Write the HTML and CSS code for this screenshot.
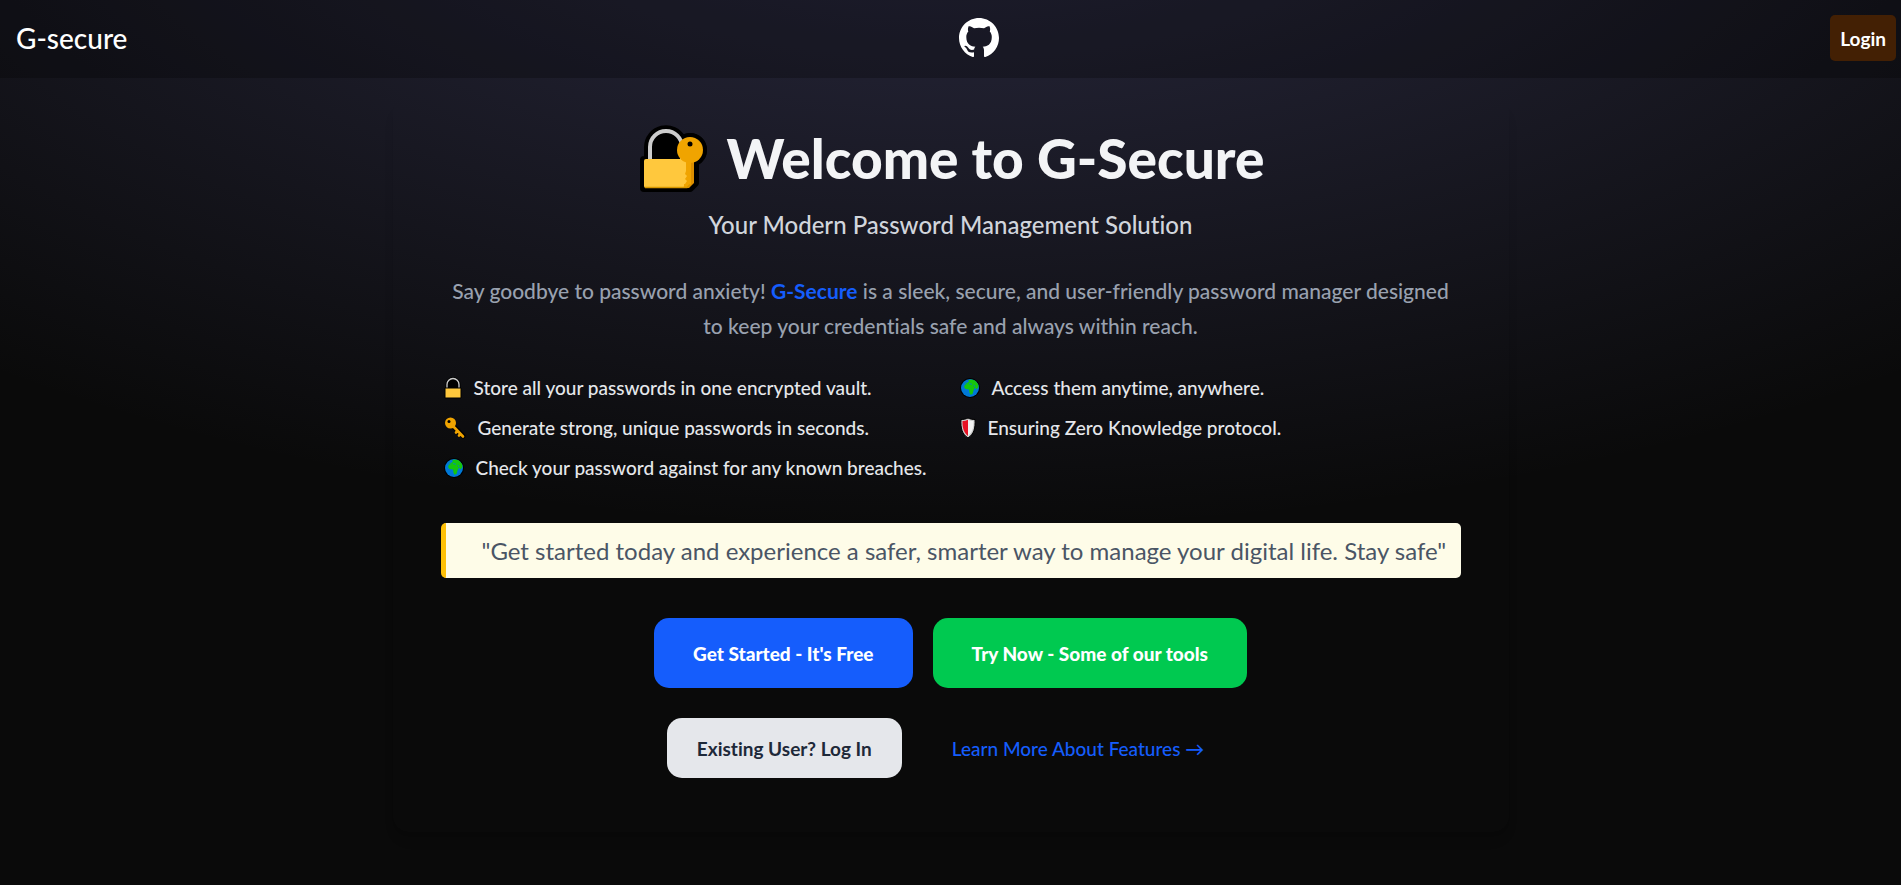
FILE: index.html
```
<!DOCTYPE html>
<html lang="en">
<head>
<meta charset="utf-8">
<title>G-secure</title>
<link rel="stylesheet" href="styles.css">
</head>
<body>
<svg class="defs" aria-hidden="true">
  <symbol id="lock" viewBox="0 0 18 22">
    <path d="M3 11V7.500a6 6 0 0 1 12 0V11" fill="#000" stroke="#000" stroke-width="3"/>
    <path d="M3 11V7.500a6 6 0 0 1 12 0V11" fill="#000" stroke="#ccc" stroke-width="1.300"/>
    <path d="M1 11h16v10H1z" fill="#ffc83d" stroke="#000"/>
  </symbol>
  <symbol id="key" viewBox="0 0 22 22">
    <path d="M6 6 19 19" stroke="#000" stroke-width="5" stroke-linecap="round"/>
    <circle cx="6.500" cy="6" r="5.500" fill="#f0a400"/>
    <path d="m8 8 11 11.500M13 14.500l-1 1M16 17.500l-1 1" stroke="#f0a400" stroke-width="2.600" stroke-linecap="round"/>
    <circle cx="5" cy="4.500" r="1.500" fill="#000"/>
  </symbol>
  <symbol id="globe" viewBox="0 0 20 20">
    <circle cx="10" cy="10" r="10" fill="#000"/>
    <circle cx="10" cy="10" r="9" fill="#0078d7"/>
    <path d="M4.500 4.500 7 5l2-1.500L8 2.300 11.500 1.500 15 2.500 18 6l.5 3-2 2.500-1.500-2-1.500 3-1 3.500-2 .8-1-2-.5-3.300-3.500-.5L4 9l1-2.500L8 6 6.500 5.700z" fill="#16c60c"/>
    <path d="m9 5.500 3 .8M14 7l1 2" stroke="#0078d7" stroke-width=".8"/>
  </symbol>
  <symbol id="shield" viewBox="0 0 16 22">
    <path d="M8 1c2 1 4.500 1.500 7 1.500C15.500 11 14 17 8 21 2 17 .500 11 1 2.500 3.500 2.500 6 2 8 1z" fill="#ccc" stroke="#000"/>
    <path d="M8 2.700v16.300C3.500 15.500 2.300 10 2.500 4 4.500 4 6.500 3.500 8 2.700z" fill="#e81224"/>
    <path d="M8 2.700v16.300c4.500-3.500 5.700-9 5.500-15C11.500 4 9.500 3.500 8 2.700z" fill="#f2f2f2"/>
  </symbol>
</svg>
<nav class="nav">
  <a class="brand" href="#">G-secure</a>
  <a class="github" href="#" aria-label="GitHub">
    <svg viewBox="0 0 16 16" aria-hidden="true"><path fill="#fff" d="M8 0C3.580 0 0 3.580 0 8c0 3.540 2.290 6.530 5.470 7.590.4.070.55-.17.55-.38 0-.19-.01-.82-.01-1.490-2.010.37-2.530-.49-2.690-.94-.09-.23-.48-.94-.82-1.130-.28-.15-.68-.52-.01-.53.63-.01 1.080.58 1.230.82.72 1.210 1.870.87 2.330.66.07-.52.28-.87.51-1.070-1.780-.2-3.640-.89-3.640-3.950 0-.87.31-1.590.82-2.150-.08-.2-.36-1.020.08-2.120 0 0 .67-.21 2.200.82.64-.18 1.320-.27 2-.27s1.360.09 2 .27c1.530-1.040 2.200-.82 2.200-.82.44 1.100.16 1.920.08 2.120.51.56.82 1.270.82 2.150 0 3.070-1.870 3.750-3.650 3.950.29.25.54.73.54 1.480 0 1.070-.01 1.930-.01 2.200 0 .21.15.46.55.38A8.010 8.010 0 0 0 16 8c0-4.420-3.580-8-8-8z"/></svg>
  </a>
  <button class="login">Login</button>
</nav>
<main class="card">
  <header class="hero">
    <h1 class="title">
      <svg class="emblem" viewBox="0 0 70 70" aria-hidden="true">
        <g fill="#000" stroke="#000" stroke-width="8" stroke-linejoin="round">
          <path d="M11 37V24a18 18 0 0 1 34-8l8-2a13 13 0 0 1 5 25v21l-5 5H7V37z"/>
          <circle cx="53" cy="27" r="13"/>
        </g>
        <path d="M13 37V24a16 16 0 0 1 32 0v13" fill="#000" stroke="#ccc" stroke-width="4"/>
        <path d="M47 36h10v24l-5 5h-6z" fill="#dc8f00"/>
        <path d="M47 36h7v25l-3 3h-5z" fill="#f0a400"/>
        <rect x="7" y="36" width="40" height="29" rx="2" fill="#ffc83d"/>
        <path d="M43 36h6v12l-1 3 2 2-2 3 2 2-2 3h-5z" fill="#ffc83d"/>
        <path d="M8 64.500h42l3-3" stroke="#d69600" stroke-width="1.500" fill="none"/>
        <circle cx="53" cy="27" r="13" fill="#f0a400"/>
        <circle cx="53" cy="21" r="2.500" fill="#000"/>
      </svg>
      <span>Welcome to G-Secure</span>
    </h1>
    <p class="tagline">Your Modern Password Management Solution</p>
  </header>
  <p class="intro">Say goodbye to password anxiety! <strong>G-Secure</strong> is a sleek, secure, and user-friendly password manager designed to keep your credentials safe and always within reach.</p>
  <ul class="features">
    <li><svg class="icon lock"><use href="#lock"/></svg>Store all your passwords in one encrypted vault.</li>
    <li><svg class="icon globe"><use href="#globe"/></svg>Access them anytime, anywhere.</li>
    <li><svg class="icon key"><use href="#key"/></svg>Generate strong, unique passwords in seconds.</li>
    <li><svg class="icon shield"><use href="#shield"/></svg>Ensuring Zero Knowledge protocol.</li>
    <li><svg class="icon globe"><use href="#globe"/></svg>Check your password against for any known breaches.</li>
  </ul>
  <blockquote class="quote">"Get started today and experience a safer, smarter way to manage your digital life. Stay safe"</blockquote>
  <div class="actions">
    <button class="btn primary">Get Started - It's Free</button>
    <button class="btn success">Try Now - Some of our tools</button>
  </div>
  <div class="actions secondary">
    <button class="btn light">Existing User? Log In</button>
    <a class="more" href="#">Learn More About Features →</a>
  </div>
</main>
</body>
</html>
```
FILE: styles.css
```
* { box-sizing: border-box; margin: 0; padding: 0; }
html { background: #0a0a0a; }
body {
  min-height: 100vh;
  background: radial-gradient(ellipse 80% 80% at 50% -20%, rgba(120, 119, 198, 0.3), transparent) no-repeat #0a0a0a;
  color: #e5e7eb;
  font-family: "Lato Medium", Lato, "Noto Sans", sans-serif;
  font-variant-ligatures: none;
}
a { text-decoration: none; }
button { border: 0; font: inherit; cursor: pointer; }
.defs { position: absolute; width: 0; height: 0; }
.nav {
  display: flex;
  align-items: center;
  justify-content: space-between;
  height: 78px;
  padding: 0 5px 2px 16px;
  background: rgba(0, 0, 0, 0.25);
}
.brand { color: #fff; font-size: 28px; }
.github, .github svg { display: block; width: 40px; height: 40px; }
.login {
  height: 46px;
  padding: 0 10px;
  border-radius: 5px;
  background: #432004;
  color: #fff;
  font-family: Lato, sans-serif;
  font-size: 19px;
  font-weight: 700;
}
.card {
  max-width: 1116px;
  margin: 20px auto 0;
  padding: 20px 48px 54px;
  border-radius: 16px;
  box-shadow: 0 10px 15px -3px rgba(0, 0, 0, 0.06), 0 4px 6px -4px rgba(0, 0, 0, 0.06);
}
.hero { text-align: center; }
.title {
  display: flex;
  align-items: center;
  justify-content: center;
  gap: 20px;
  color: #f3f4f6;
  font-family: Lato, sans-serif;
  font-size: 55px;
  font-weight: 900;
  line-height: 80px;
}
.emblem { width: 70px; height: 70px; }
.tagline { margin-top: 11px; color: #d1d5dc; font-size: 24px; line-height: 32px; }
.intro { margin-top: 32px; color: #99a1af; font-size: 21px; line-height: 35px; text-align: center; }
.intro strong { color: #155dfc; font-family: Lato, sans-serif; }
.features {
  display: grid;
  grid-template-columns: 1fr 1fr;
  gap: 16px 12px;
  margin-top: 33px;
  list-style: none;
  font-size: 19px;
  line-height: 24px;
}
.features li { display: flex; align-items: center; gap: 12px; padding-left: 3px; }
.icon { flex: none; height: 22px; }
.icon.lock { width: 18px; }
.icon.key { width: 22px; }
.icon.globe { width: 20px; }
.icon.shield { width: 16px; }
.quote {
  margin-top: 43px;
  padding: 10px 5px 10px 36px;
  border-left: 5px solid #ffc107;
  border-radius: 5px;
  background: #fefce8;
  color: #4a5565;
  font-family: Lato, sans-serif;
  font-size: 24px;
  line-height: 35px;
}
.actions { display: flex; align-items: center; justify-content: center; gap: 20px; margin-top: 40px; }
.actions.secondary { margin-top: 30px; }
.btn { height: 70px; padding: 0 39px; border-radius: 15px; color: #fff; font-family: Lato, sans-serif; font-size: 19px; font-weight: 900; }
.primary { background: #155dfc; }
.success { background: #00c950; }
.light { height: 60px; padding: 0 30px; background: #e5e7eb; color: #1e2939; font-weight: 700; }
.more { padding: 0 30px; color: #155dfc; font-size: 19px; }
```
